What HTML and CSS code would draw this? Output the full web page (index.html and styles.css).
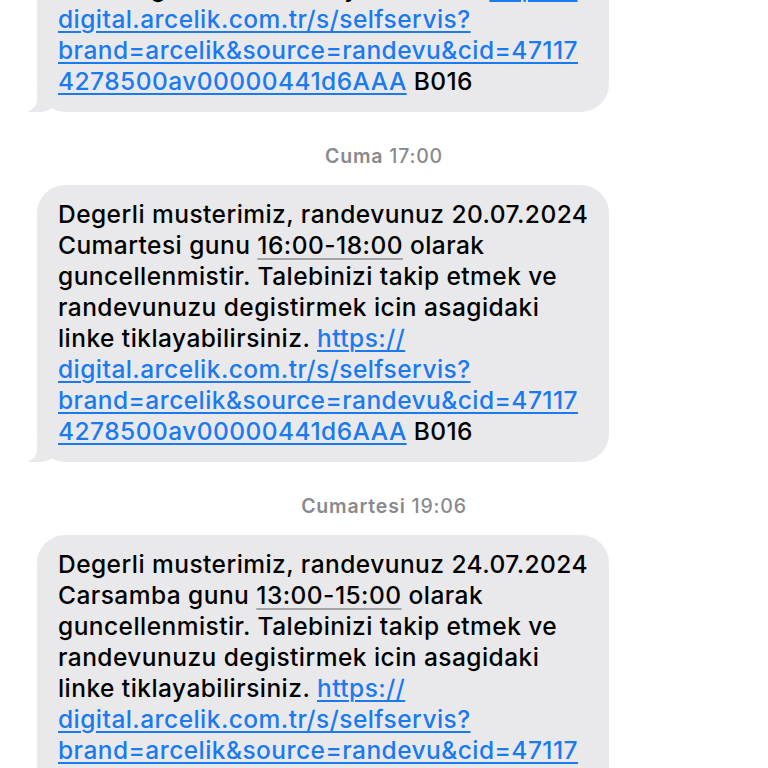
FILE: index.html
```html
<!DOCTYPE html>
<html lang="tr">
<head>
<meta charset="utf-8">
<title>Mesajlar</title>
<link rel="stylesheet" href="styles.css">
</head>
<body>
<div class="thread">
  <div class="bubble first">
    <span class="line">icin asagidaki linke tiklayabilirsiniz. <a class="link">https://</a></span>
    <span class="line"><a class="link">digital.arcelik.com.tr/s/selfservis?</a></span>
    <span class="line"><a class="link">brand=arcelik&amp;source=randevu&amp;cid=47117</a></span>
    <span class="line"><a class="link">4278500av00000441d6AAA</a> B016</span>
  </div>

  <div class="stamp"><b>Cuma</b> 17:00</div>

  <div class="bubble">
    <span class="line">Degerli musterimiz, randevunuz 20.07.2024</span>
    <span class="line">Cumartesi gunu <span class="time">16:00-18:00</span> olarak</span>
    <span class="line">guncellenmistir. Talebinizi takip etmek ve</span>
    <span class="line">randevunuzu degistirmek icin asagidaki</span>
    <span class="line">linke tiklayabilirsiniz. <a class="link">https://</a></span>
    <span class="line"><a class="link">digital.arcelik.com.tr/s/selfservis?</a></span>
    <span class="line"><a class="link">brand=arcelik&amp;source=randevu&amp;cid=47117</a></span>
    <span class="line"><a class="link">4278500av00000441d6AAA</a> B016</span>
  </div>

  <div class="stamp"><b>Cumartesi</b> 19:06</div>

  <div class="bubble">
    <span class="line">Degerli musterimiz, randevunuz 24.07.2024</span>
    <span class="line">Carsamba gunu <span class="time">13:00-15:00</span> olarak</span>
    <span class="line">guncellenmistir. Talebinizi takip etmek ve</span>
    <span class="line">randevunuzu degistirmek icin asagidaki</span>
    <span class="line">linke tiklayabilirsiniz. <a class="link">https://</a></span>
    <span class="line"><a class="link">digital.arcelik.com.tr/s/selfservis?</a></span>
    <span class="line"><a class="link">brand=arcelik&amp;source=randevu&amp;cid=47117</a></span>
    <span class="line"><a class="link">4278500av00000441d6AAA</a> B016</span>
  </div>
</div>
</body>
</html>
```

FILE: styles.css
```css
html, body {
  margin: 0;
  padding: 0;
  background: #ffffff;
  overflow: hidden;
}

body {
  width: 768px;
  height: 768px;
  font-family: Inter, "Noto Sans", "Liberation Sans", sans-serif;
}

.thread {
  display: flex;
  flex-direction: column;
  align-items: flex-start;
  padding-left: 37px;
  margin-top: -41px;
}

.bubble {
  position: relative;
  box-sizing: border-box;
  width: 572px;
  padding: 14px 4px 15px 21px;
  background: #e9e9eb;
  border-radius: 28px;
  color: #000;
  font-size: 24.5px;
  font-weight: 500;
  line-height: 31px;
  letter-spacing: 0.45px;
  display: flex;
  flex-direction: column;
}

.bubble::before {
  content: "";
  position: absolute;
  bottom: 0;
  left: -9px;
  width: 30px;
  height: 26px;
  background: #e9e9eb;
  border-bottom-right-radius: 18px 16px;
}

.bubble::after {
  content: "";
  position: absolute;
  bottom: 0;
  left: -30px;
  width: 30px;
  height: 27px;
  background: #ffffff;
  border-bottom-right-radius: 14px 12px;
}

.line {
  white-space: nowrap;
  display: block;
}

.link {
  color: #1a7bf0;
  text-decoration: underline;
  text-decoration-thickness: 2px;
  text-underline-offset: 3px;
}

.time {
  text-decoration: underline;
  text-decoration-color: #a3a3a8;
  text-decoration-thickness: 2px;
  text-underline-offset: 4px;
}

.stamp {
  align-self: stretch;
  margin: 33px 0 18px -37px;
  text-align: center;
  color: #8a8a8e;
  font-size: 19.5px;
  line-height: 22px;
  font-weight: 500;
  letter-spacing: 0.8px;
}

.stamp b {
  font-weight: 600;
}
```
